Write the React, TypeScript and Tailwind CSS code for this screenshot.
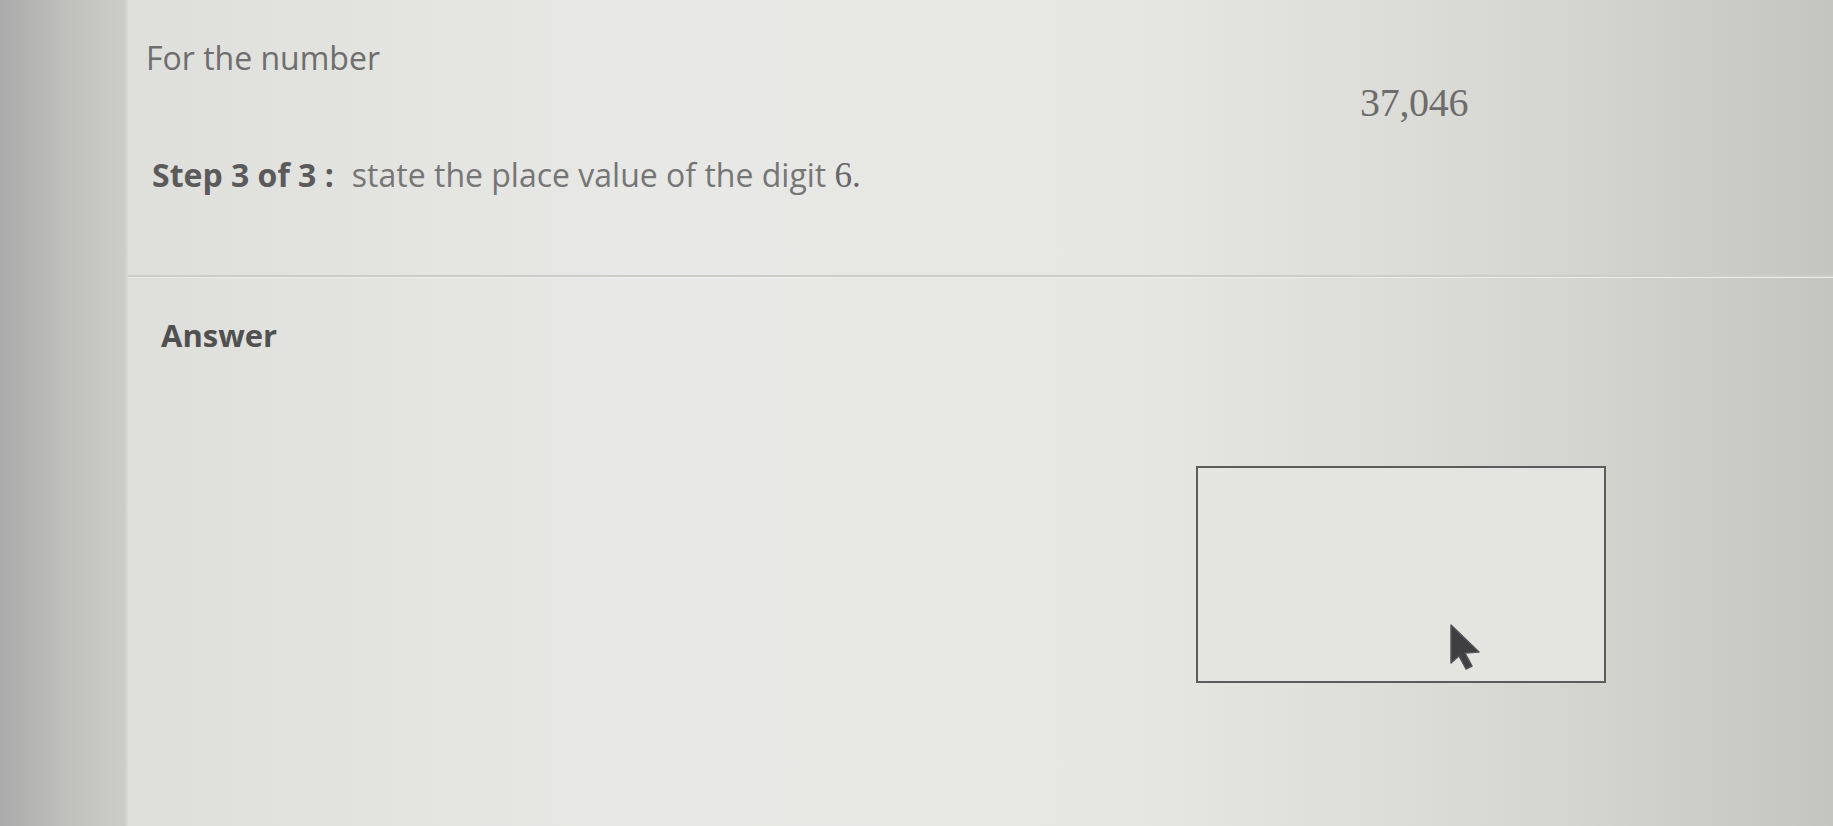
import React from 'react';

function Pointer() {
	return (
		<svg
			className="absolute left-[251px] top-[155px]"
			width="34"
			height="50"
			viewBox="0 0 34 50"
		>
			<path
				d="M2 2 L2 40 L10 33 L17 46 L23 43 L16 30 L30 29 Z"
				fill="#3f3f42"
				stroke="#55555a"
				strokeWidth="1.5"
				strokeLinejoin="round"
			/>
		</svg>
	);
}

export default function App() {
	return (
		<div className="flex h-[826px] w-full overflow-hidden bg-[linear-gradient(90deg,#dcdcd8_0%,#e8e8e6_35%,#e6e6e3_62%,#d6d6d1_85%,#c4c4c0_100%)] font-['Open_Sans',sans-serif]">
			<div className="w-[128px] shrink-0 border-r-2 border-[#d8d8d4] bg-[linear-gradient(90deg,#ababab_0%,#c0c0bd_55%,#cdcdc8_100%)]" />

			<div className="flex flex-1 flex-col">
				<div className="pt-[38px]">
					<p className="ml-[18px] h-[40px] text-[32px] leading-[40px] text-[#6e6e6e]">
						For the number
					</p>
					<p className="ml-[1232px] mt-[1px] h-[48px] font-['Liberation_Serif',serif] text-[40px] leading-[48px] tracking-[-0.3px] text-[#6c6c6c]">
						37,046
					</p>
					<p className="ml-[24px] mt-[26px] h-[44px] text-[32px] leading-[44px] text-[#767676]">
						<span className="mr-[18px] font-bold text-[#5a5a5a]">Step 3 of 3 :</span>
						state the place value of the digit{' '}
						<span className="font-['Liberation_Serif',serif] text-[35px] text-[#666]">6.</span>
					</p>
				</div>

				<div className="mt-[78px] h-[3px] border-t-2 border-[#cdcdc8] bg-[#ecece9]" />

				<p className="ml-[33px] mt-[37px] h-[40px] text-[31px] font-bold leading-[40px] text-[#505050]">
					Answer
				</p>

				<div className="relative ml-[1068px] mt-[111px] h-[217px] w-[410px] border-2 border-[#5c5c5c] bg-[#e4e4e1]">
					<Pointer />
				</div>
			</div>
		</div>
	);
}
